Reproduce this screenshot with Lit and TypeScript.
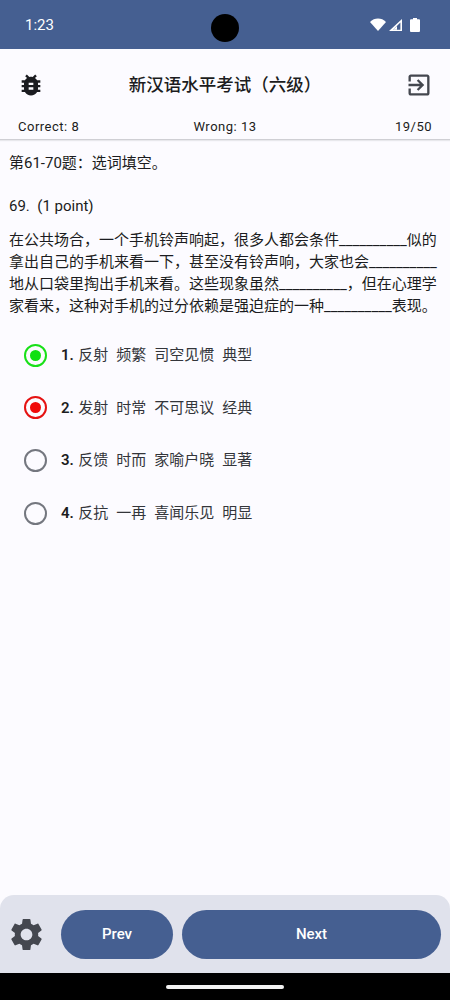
import { LitElement, html, css, svg } from "lit";
import { customElement } from "lit/decorators.js";

const BUG = "M20 8h-2.81c-.45-.78-1.07-1.45-1.82-1.96L17 4.41 15.59 3l-2.17 2.17C12.96 5.06 12.49 5 12 5c-.49 0-.96.06-1.41.17L8.41 3 7 4.41l1.62 1.63C7.88 6.55 7.26 7.22 6.81 8H4v2h2.09c-.05.33-.09.66-.09 1v1H4v2h2v1c0 .34.04.67.09 1H4v2h2.81c1.04 1.79 2.97 3 5.19 3s4.15-1.21 5.19-3H20v-2h-2.09c.05-.33.09-.66.09-1v-1h2v-2h-2v-1c0-.34-.04-.67-.09-1H20V8zm-6 8h-4v-2h4v2zm0-4h-4v-2h4v2z";
const EXIT = "M10.09 15.59L11.5 17l5-5-5-5-1.41 1.41L12.67 11H3v2h9.67l-2.58 2.59zM19 3H5c-1.11 0-2 .9-2 2v4h2V5h14v14H5v-4H3v4c0 1.1.89 2 2 2h14c1.1 0 2-.9 2-2V5c0-1.1-.9-2-2-2z";
const GEAR = "M19.14 12.94c.04-.3.06-.61.06-.94 0-.32-.02-.64-.07-.94l2.03-1.58c.18-.14.23-.41.12-.61l-1.92-3.32c-.12-.22-.37-.29-.59-.22l-2.39.96c-.5-.38-1.03-.7-1.62-.94l-.36-2.54c-.04-.24-.24-.41-.48-.41h-3.84c-.24 0-.43.17-.47.41l-.36 2.54c-.59.24-1.13.57-1.62.94l-2.39-.96c-.22-.08-.47 0-.59.22L2.74 8.87c-.12.21-.08.47.12.61l2.03 1.58c-.05.3-.09.63-.09.94s.02.64.07.94l-2.03 1.58c-.18.14-.23.41-.12.61l1.92 3.32c.12.22.37.29.59.22l2.39-.96c.5.38 1.03.7 1.62.94l.36 2.54c.05.24.24.41.48.41h3.84c.24 0 .44-.17.47-.41l.36-2.54c.59-.24 1.13-.56 1.62-.94l2.39.96c.22.08.47 0 .59-.22l1.92-3.32c.12-.22.07-.47-.12-.61l-2.01-1.58zM12 15.6c-1.98 0-3.6-1.62-3.6-3.6s1.62-3.6 3.6-3.6 3.6 1.62 3.6 3.6-1.62 3.6-3.6 3.6z";

const icon = (d: string, cls: string) =>
  html`<svg class=${cls} viewBox="0 0 24 24" fill="currentColor">${svg`<path d=${d}></path>`}</svg>`;

const OPTIONS = [
  { n: "1.", t: "反射  频繁  司空见惯  典型", s: "right" },
  { n: "2.", t: "发射  时常  不可思议  经典", s: "wrong" },
  { n: "3.", t: "反馈  时而  家喻户晓  显著", s: "" },
  { n: "4.", t: "反抗  一再  喜闻乐见  明显", s: "" },
];

@customElement("app-root")
export class AppRoot extends LitElement {
  static styles = css`
    :host {
      display: flex;
      flex-direction: column;
      height: 1000px;
      position: relative;
      overflow: hidden;
      background: #fcfbff;
      color: #1b1c20;
      font-family: Roboto, "Noto Sans CJK SC", sans-serif;
    }
    .status {
      height: 49px;
      flex: none;
      background: #455f91;
      color: #fff;
      display: flex;
      align-items: center;
      justify-content: space-between;
      padding: 0 30px 0 25px;
      font-size: 15px;
      box-sizing: border-box;
    }
    .status-icons { display: flex; align-items: center; gap: 2px; }
    .batt { margin-left: 6px; }
    .camera {
      position: absolute;
      left: 211px;
      top: 14px;
      width: 28px;
      height: 28px;
      border-radius: 50%;
      background: #000;
    }
    .appbar {
      height: 71px;
      flex: none;
      display: flex;
      align-items: center;
      justify-content: space-between;
      padding: 0 17px;
      box-sizing: border-box;
    }
    .appbar .ic { width: 28px; height: 28px; color: #1b1c20; flex: none; }
    .appbar .ic.exit { color: #44474f; }
    .title { font-size: 17.5px; font-weight: 500; line-height: 24px; }
    .stats {
      height: 20px;
      box-sizing: border-box;
      flex: none;
      display: grid;
      grid-template-columns: 1fr auto 1fr;
      align-items: center;
      padding: 0 18px 7px;
      font-size: 13px;
      line-height: 13px;
      letter-spacing: 0.5px;
      border-bottom: 1px solid #cfcfd4;
      box-shadow: 0 1px 1px #e8e8ec;
    }
    .stats .end { text-align: right; }
    .content {
      flex: 1;
      min-height: 0;
      padding: 12px 9px 0;
      font-size: 15px;
      line-height: 22px;
    }
    .section { height: 22px; }
    .qnum { margin-top: 21px; height: 22px; white-space: pre; }
    .passage { margin: 12px 0 0; width: 432px; }
    .options { display: flex; flex-direction: column; margin-top: 12px; padding-left: 15px; }
    .opt { height: 52.6px; display: flex; align-items: center; gap: 14px; }
    .radio {
      width: 23px;
      height: 23px;
      box-sizing: border-box;
      border-radius: 50%;
      border: 2px solid #74777f;
      display: flex;
      align-items: center;
      justify-content: center;
      flex: none;
    }
    .radio i { width: 11px; height: 11px; border-radius: 50%; display: block; }
    .radio.right { border-color: #18e018; }
    .radio.right i { background: #10e010; }
    .radio.wrong { border-color: #e51212; }
    .radio.wrong i { background: #f00a0a; }
    .opt-text { font-size: 15px; white-space: pre; color: #33353a; word-spacing: 0.25px; }
    .opt-text b { font-weight: 600; color: #1b1c20; margin-right: 4.5px; }
    .bottom {
      height: 78px;
      flex: none;
      background: #e0e2ec;
      border-radius: 14px 14px 0 0;
      display: flex;
      align-items: center;
      padding: 0 9px 0 7px;
      box-sizing: border-box;
    }
    .gear { width: 39px; height: 39px; color: #44474f; flex: none; margin-right: 15px; margin-top: 1px; }
    .btn {
      height: 49px;
      border-radius: 24.5px;
      background: #455f91;
      color: #fff;
      font-size: 15px;
      font-weight: 500;
      display: flex;
      align-items: center;
      justify-content: center;
    }
    .btn.prev { width: 112px; margin-right: 9px; }
    .btn.next { flex: 1; }
    .nav {
      height: 27px;
      flex: none;
      background: #000;
      display: flex;
      align-items: center;
      justify-content: center;
    }
    .handle { width: 118px; height: 4px; border-radius: 2px; background: #f2f2f2; }
  `;

  render() {
    return html`
      <div class="status">
        <span class="time">1:23</span>
        <div class="status-icons">
          <svg width="16" height="14" viewBox="0 0 16 14" fill="#fff"><path d="M0 4 C4.5 -0.6 11.5 -0.6 16 4 L8 13 Z"></path></svg>
          <svg width="14" height="14" viewBox="0 0 14 14" fill="#fff"><path d="M14 1 V13 H1 Z M12.4 4.6 L5 11.8 H12.4 Z" fill-rule="evenodd"></path><path d="M9 8 L5 11.8 H9 Z"></path></svg>
          <svg class="batt" width="10" height="14" viewBox="0 0 10 14" fill="#fff"><path d="M3 0 H7 V1.2 H9 A1 1 0 0 1 10 2.2 V13 A1 1 0 0 1 9 14 H1 A1 1 0 0 1 0 13 V2.2 A1 1 0 0 1 1 1.2 H3 Z"></path></svg>
        </div>
      </div>
      <div class="camera"></div>
      <div class="appbar">
        ${icon(BUG, "ic")}
        <div class="title">新汉语水平考试（六级）</div>
        ${icon(EXIT, "ic exit")}
      </div>
      <div class="stats">
        <span>Correct: 8</span>
        <span>Wrong: 13</span>
        <span class="end">19/50</span>
      </div>
      <div class="content">
        <div class="section">第61-70题：选词填空。</div>
        <div class="qnum">69.  (1 point)</div>
        <p class="passage">在公共场合，一个手机铃声响起，很多人都会条件__________似的拿出自己的手机来看一下，甚至没有铃声响，大家也会__________地从口袋里掏出手机来看。这些现象虽然__________，但在心理学家看来，这种对手机的过分依赖是强迫症的一种__________表现。</p>
        <div class="options">
          ${OPTIONS.map(
            (o) => html`<div class="opt">
              <span class="radio ${o.s}">${o.s ? html`<i></i>` : ""}</span>
              <span class="opt-text"><b>${o.n}</b>${o.t}</span>
            </div>`
          )}
        </div>
      </div>
      <div class="bottom">
        ${icon(GEAR, "gear")}
        <div class="btn prev">Prev</div>
        <div class="btn next">Next</div>
      </div>
      <div class="nav"><div class="handle"></div></div>
    `;
  }
}
